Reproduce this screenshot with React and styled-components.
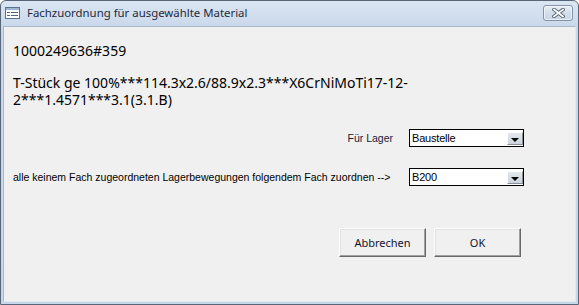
import React from "react";
import styled, { createGlobalStyle } from "styled-components";

const Global = createGlobalStyle`
  html, body { margin: 0; padding: 0; }
  body { width: 579px; height: 305px; overflow: hidden; background: #fff; }
  * { box-sizing: border-box; }
`;

const Window = styled.div`
  width: 579px;
  height: 305px;
  border: 1px solid #59667a;
  border-radius: 6px 6px 0 0;
  background: linear-gradient(#dbe6f3 0px, #c9d8ea 26px, #c7d6e9 100%);
  display: flex;
  flex-direction: column;
`;

const TitleBar = styled.div`
  height: 25px;
  flex: none;
  display: flex;
  align-items: flex-start;
  padding: 0 5px 0 4px;
`;

const TitleIcon = styled.svg`
  width: 15px;
  height: 12px;
  margin-top: 6px;
  flex: none;
`;

const Title = styled.div`
  margin-left: 7px;
  margin-top: 3px;
  font-family: "Noto Sans", "Open Sans", sans-serif;
  font-size: 11.4px;
  line-height: 17px;
  color: #1e2b3d;
  white-space: nowrap;
  flex: 1;
`;

const CloseButton = styled.div`
  width: 30px;
  height: 16px;
  margin-top: 4px;
  border: 1px solid #8493a6;
  border-radius: 3px;
  background: linear-gradient(#e9eff6, #d3deeb 50%, #c9d6e6);
  box-shadow: inset 0 0 0 1px rgba(255,255,255,0.55);
  display: flex;
  align-items: center;
  justify-content: center;
`;

const Frame = styled.div`
  flex: 1;
  display: flex;
  padding: 0 2px 2px 2px;
`;

const Client = styled.div`
  flex: 1;
  min-width: 0;
  background: #f0f0f0;
  border: 1px solid #a9b8ca;
  border-bottom-color: #dfe7f1;
  border-right-color: #dfe7f1;
  padding: 15px 0 0 9px;
  display: flex;
  flex-direction: column;
`;

const BigText = styled.div`
  font-family: "Noto Sans", "Open Sans", sans-serif;
  font-size: 14px;
  line-height: 17px;
  color: #000;
  margin-top: ${(p) => p.$gap || 0}px;
  white-space: nowrap;
`;

const Form = styled.div`
  margin-top: 21px;
  padding-right: 51px;
  display: grid;
  grid-template-columns: minmax(0, 1fr) 115px;
  column-gap: 16px;
  row-gap: 21px;
  grid-auto-rows: 18px;
  align-items: center;
`;

const Label = styled.div`
  font-family: "Liberation Sans", Arial, sans-serif;
  font-size: 10.5px;
  color: ${(p) => p.$tone || "#000"};
  justify-self: ${(p) => (p.$right ? "end" : "start")};
  white-space: nowrap;
`;

const Combo = styled.div`
  height: 18px;
  border: 1px solid #000;
  background: #fff;
  display: flex;
  align-items: center;
  padding-left: 2px;
`;

const ComboText = styled.span`
  flex: 1;
  font-family: "Liberation Sans", Arial, sans-serif;
  font-size: 11px;
  letter-spacing: -0.2px;
  color: #000;
`;

const DropButton = styled.div`
  width: 16px;
  height: 13px;
  background: linear-gradient(#e4e8ee, #ccd3dc);
  border-top: 1px solid #fff;
  border-left: 1px solid #fff;
  border-right: 1px solid #8a8f96;
  border-bottom: 1px solid #8a8f96;
  display: flex;
  align-items: flex-end;
  justify-content: center;
  padding-bottom: 2px;
`;

const Arrow = styled.div`
  width: 0;
  height: 0;
  border-left: 4px solid transparent;
  border-right: 4px solid transparent;
  border-top: 4px solid #000;
`;

const Buttons = styled.div`
  margin-top: 42px;
  padding-right: 54px;
  display: flex;
  justify-content: flex-end;
  gap: 8px;
`;

const Button = styled.div`
  width: 87px;
  height: 29px;
  background: #f0f0f0;
  border-top: 1px solid #fff;
  border-left: 1px solid #fff;
  border-right: 1px solid #696969;
  border-bottom: 1px solid #696969;
  box-shadow: inset -1px -1px 0 #a0a0a0, inset 1px 1px 0 #e3e3e3;
  display: flex;
  align-items: center;
  justify-content: center;
  font-family: "Noto Sans", "Open Sans", sans-serif;
  font-size: 11px;
  color: #10142c;
`;

function ComboBox({ value }) {
  return (
    <Combo>
      <ComboText>{value}</ComboText>
      <DropButton>
        <Arrow />
      </DropButton>
    </Combo>
  );
}

export default function App() {
  return (
    <>
      <Global />
      <Window>
        <TitleBar>
          <TitleIcon viewBox="0 0 15 12">
            <rect x="0.5" y="0.5" width="14" height="11" fill="#fdfeff" stroke="#5a7290" />
            <rect x="1" y="1" width="13" height="2" fill="#9fb6d2" />
            <rect x="2" y="5" width="3" height="1" fill="#4f6784" />
            <rect x="6" y="5" width="7" height="1" fill="#4f6784" />
            <rect x="2" y="8" width="3" height="1" fill="#4f6784" />
            <rect x="6" y="8" width="7" height="1" fill="#4f6784" />
          </TitleIcon>
          <Title>Fachzuordnung für ausgewählte Material</Title>
          <CloseButton>
            <svg width="13" height="10" viewBox="0 0 13 10">
              <path d="M2 1.5 L11 8.5 M11 1.5 L2 8.5" stroke="#5f6b7b" strokeWidth="3.6" strokeLinecap="square" />
              <path d="M2 1.5 L11 8.5 M11 1.5 L2 8.5" stroke="#fff" strokeWidth="1.6" strokeLinecap="square" />
            </svg>
          </CloseButton>
        </TitleBar>
        <Frame>
          <Client>
            <BigText>1000249636#359</BigText>
            <BigText $gap={15}>
              T-Stück ge 100%***114.3x2.6/88.9x2.3***X6CrNiMoTi17-12-
              <br />
              2***1.4571***3.1(3.1.B)
            </BigText>
            <Form>
              <Label $right $tone="#141c3c">Für Lager</Label>
              <ComboBox value="Baustelle" />
              <Label>alle keinem Fach zugeordneten Lagerbewegungen folgendem Fach zuordnen --&gt;</Label>
              <ComboBox value="B200" />
            </Form>
            <Buttons>
              <Button>Abbrechen</Button>
              <Button>OK</Button>
            </Buttons>
          </Client>
        </Frame>
      </Window>
    </>
  );
}
